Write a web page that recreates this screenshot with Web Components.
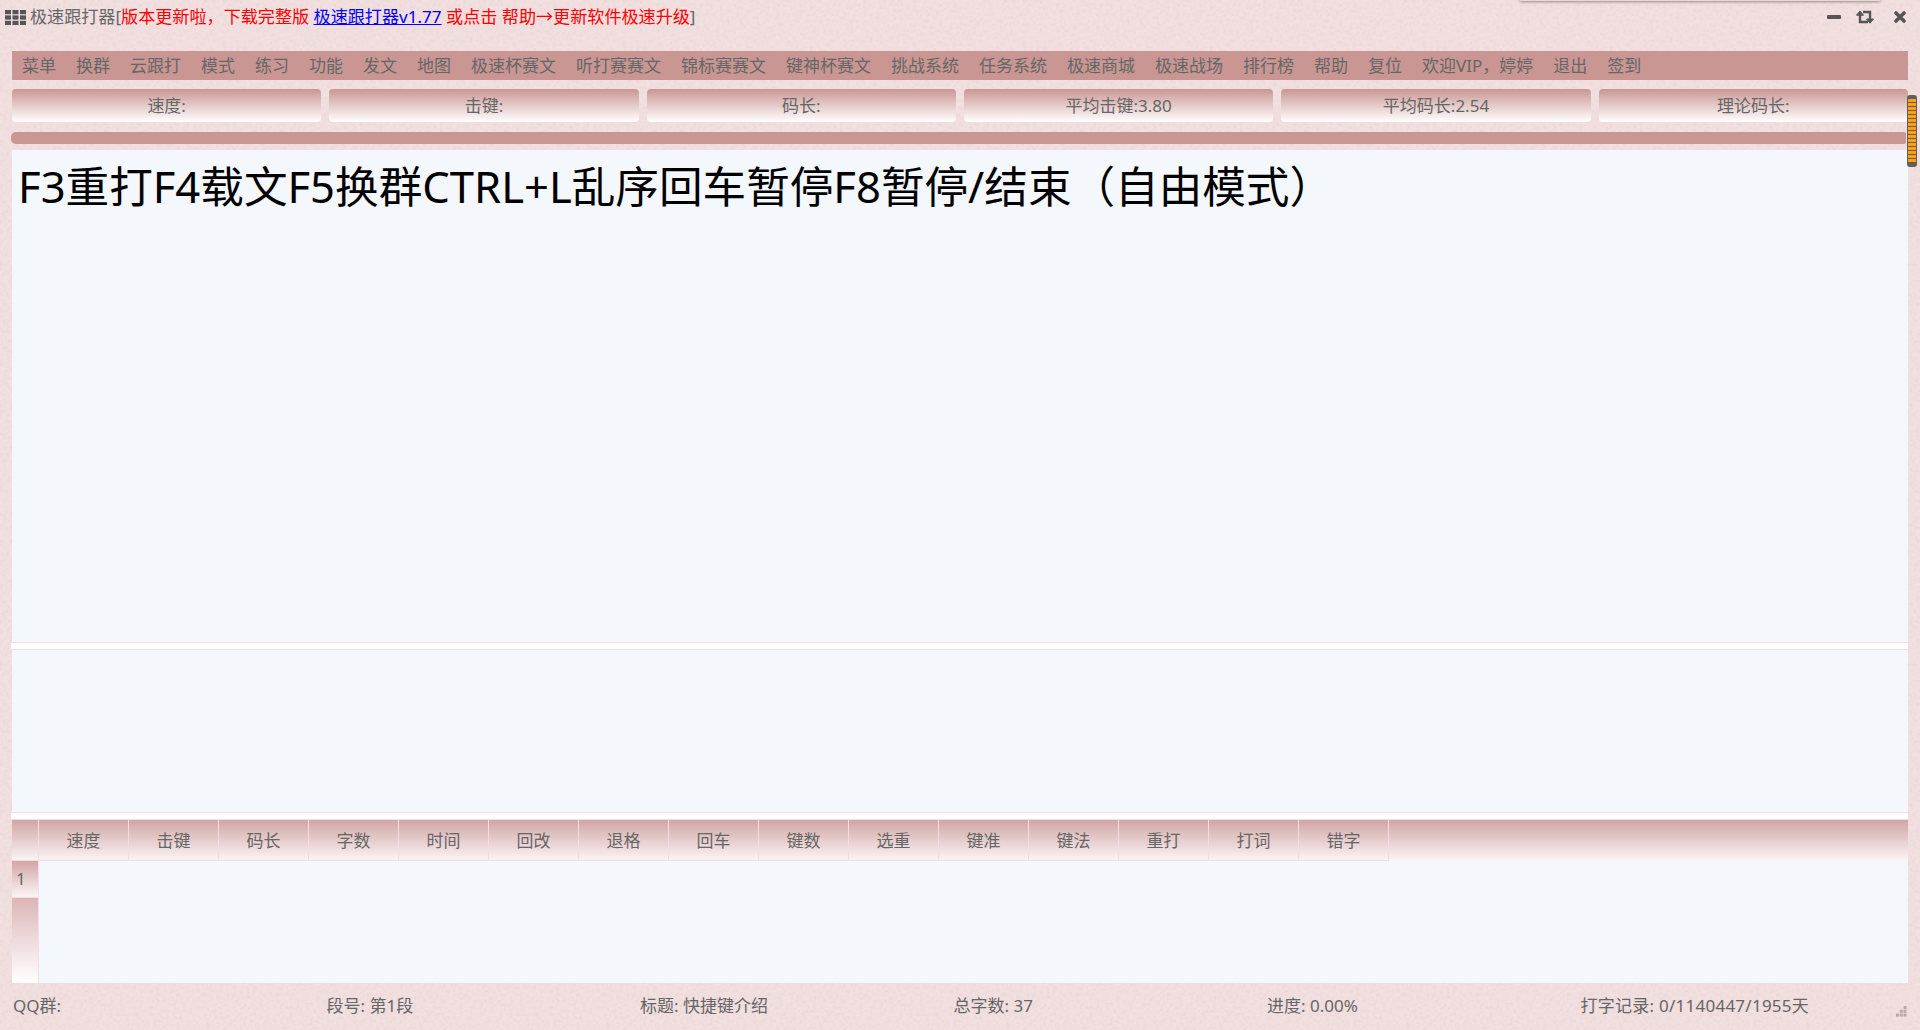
<!DOCTYPE html>
<html lang="zh">
<head>
<meta charset="utf-8">
<title>极速跟打器</title>
<style>
html, body { margin: 0; height: 100%; overflow: hidden; }
body { font-family: "Noto Sans", "Noto Sans CJK SC", sans-serif; color: #666; }
</style>
</head>
<body>
<typer-app>
  <title-bar slot="title"></title-bar>
  <menu-bar slot="menu"></menu-bar>
  <stat-row slot="stats"></stat-row>
  <progress-strip slot="progress"></progress-strip>
  <text-pane slot="target" size="big">F3重打F4载文F5换群CTRL+L乱序回车暂停F8暂停/结束（自由模式）</text-pane>
  <text-pane slot="input"></text-pane>
  <score-table slot="table"></score-table>
  <status-bar slot="status"></status-bar>
</typer-app>

<script>
const noise = "url(\"data:image/svg+xml," + encodeURIComponent(
  '<svg xmlns="http://www.w3.org/2000/svg" width="400" height="400">' +
  '<filter id="n"><feTurbulence type="fractalNoise" baseFrequency="0.3" numOctaves="3" stitchTiles="stitch"/>' +
  '<feColorMatrix values="0 0 0 0 0.6  0 0 0 0 0.38  0 0 0 0 0.38  0.3 0 0 0 -0.11"/></filter>' +
  '<rect width="400" height="400" filter="url(#n)"/></svg>') + "\")";

class TyperApp extends HTMLElement {
  constructor() {
    super();
    this.attachShadow({ mode: "open" });
    this.shadowRoot.innerHTML = `
<style>
:host {
  display: flex;
  flex-direction: column;
  width: 1920px;
  height: 1030px;
  overflow: hidden;
  background: #f2e0e1 ${noise};
  font-size: 17px;
}
.body {
  display: flex;
  flex-direction: column;
  flex: 1;
  padding: 0 12px;
  min-height: 0;
}
.gap-a { height: 9px; }
.gap-b { height: 10px; }
.gap-c { height: 6px; }
.rule {
  height: 6px;
  margin-left: -1px;
  background: #fff;
  border-top: 1px solid #f3dde0;
  border-bottom: 1px solid #f3dde0;
}
.rule.last { border-bottom: 0; }
</style>
<slot name="title"></slot>
<div class="body">
  <slot name="menu"></slot>
  <div class="gap-a"></div>
  <slot name="stats"></slot>
  <div class="gap-b"></div>
  <slot name="progress"></slot>
  <div class="gap-c"></div>
  <slot name="target"></slot>
  <div class="rule"></div>
  <slot name="input"></slot>
  <div class="rule last"></div>
  <slot name="table"></slot>
</div>
<slot name="status"></slot>
`;
  }
}

class TitleBar extends HTMLElement {
  constructor() {
    super();
    this.attachShadow({ mode: "open" });
    this.shadowRoot.innerHTML = `
<style>
:host {
  display: flex;
  align-items: center;
  position: relative;
  height: 34px;
  margin-bottom: 17px;
  padding-left: 5px;
  white-space: nowrap;
  line-height: 32px;
  font-size: 17.1px;
}
.logo { width: 21px; height: 15px; margin-right: 4px; flex: none; }
.red { color: #f00; }
a { color: #00f; text-decoration: underline; }
.win { display: flex; align-items: center; margin-left: auto; padding-right: 14px; }
.win svg { display: block; }
.peek {
  position: absolute;
  left: 1520px;
  top: -4px;
  width: 360px;
  height: 5px;
  background: #e9d6d7;
  box-shadow: 0 1px 3px rgba(90,70,70,.55);
}
</style>
<svg class="logo" viewBox="0 0 21 15" fill="#555">
  <rect x="0" y="0" width="6" height="4.2"/><rect x="7.5" y="0" width="6" height="4.2"/><rect x="15" y="0" width="6" height="4.2"/>
  <rect x="0" y="5.4" width="6" height="4.2"/><rect x="7.5" y="5.4" width="6" height="4.2"/><rect x="15" y="5.4" width="6" height="4.2"/>
  <rect x="0" y="10.8" width="6" height="4.2"/><rect x="7.5" y="10.8" width="6" height="4.2"/><rect x="15" y="10.8" width="6" height="4.2"/>
</svg>
<span>极速跟打器[<span class="red">版本更新啦，下载完整版 </span><a href="#">极速跟打器v1.77</a><span class="red"> 或点击 帮助→更新软件极速升级</span>]</span>
<div class="win">
  <svg width="14" height="14" viewBox="0 0 14 14" style="margin-right:15px"><rect x="0" y="5" width="14" height="4" rx="1" fill="#555"/></svg>
  <svg width="18" height="14" viewBox="0 0 18 14" style="margin-right:20px" fill="none" stroke="#555" stroke-width="2.4">
    <path d="M4 3v9h8"/><path d="M7 2h7v9"/>
    <path d="M0.5 5.2L4 1L7.5 5.2z" fill="#555" stroke-width="1"/><path d="M10.5 9L14 13.2L17.5 9z" fill="#555" stroke-width="1"/>
  </svg>
  <svg width="12" height="12" viewBox="0 0 12 12" stroke="#555" stroke-width="3.6" stroke-linecap="round"><path d="M2 2l8 8M10 2l-8 8"/></svg>
</div>
<div class="peek"></div>
`;
  }
}

class MenuBar extends HTMLElement {
  constructor() {
    super();
    this.attachShadow({ mode: "open" });
    const items = ["菜单","换群","云跟打","模式","练习","功能","发文","地图","极速杯赛文","听打赛赛文","锦标赛赛文","键神杯赛文","挑战系统","任务系统","极速商城","极速战场","排行榜","帮助","复位","欢迎VIP，婷婷","退出","签到"];
    this.shadowRoot.innerHTML = `
<style>
:host {
  display: flex;
  height: 29px;
  line-height: 29px;
  background: #c99693;
  white-space: nowrap;
}
span { padding: 0 10px; }
</style>
` + items.map(t => `<span>${t}</span>`).join("");
  }
}

class StatRow extends HTMLElement {
  constructor() {
    super();
    this.attachShadow({ mode: "open" });
    const items = ["速度:","击键:","码长:","平均击键:3.80","平均码长:2.54","理论码长:"];
    this.shadowRoot.innerHTML = `
<style>
:host {
  display: grid;
  grid-template-columns: repeat(6, 1fr);
  gap: 8px;
  height: 33px;
}
div {
  line-height: 33px;
  text-align: center;
  border-radius: 4px;
  background: linear-gradient(#c99693, #fff);
}
</style>
` + items.map(t => `<div>${t}</div>`).join("");
  }
}

class ProgressStrip extends HTMLElement {
  constructor() {
    super();
    this.attachShadow({ mode: "open" });
    this.shadowRoot.innerHTML = `
<style>
:host {
  display: block;
  position: relative;
  height: 12px;
  margin-right: 2px;
  margin-left: -1px;
  background: #c99693;
  border-radius: 5px 2px 2px 5px;
}
.thumb {
  position: absolute;
  left: 1896px;
  top: -37px;
  width: 10px;
  height: 72px;
  box-sizing: border-box;
  border: 1px solid #5f5f5f;
  border-width: 4px 1px;
  border-radius: 3px;
  background: repeating-linear-gradient(#f7a11a 0 3px, #7a5a2a 3px 4px);
}
</style>
<div class="thumb"></div>
`;
  }
}

class TextPane extends HTMLElement {
  constructor() {
    super();
    this.attachShadow({ mode: "open" });
    this.shadowRoot.innerHTML = `
<style>
:host {
  display: block;
  background: #f4f7fc;
  height: 162px;
  color: #000;
  overflow: hidden;
}
:host([size="big"]) {
  height: 492px;
  padding: 3px 6px 0;
  box-sizing: border-box;
  font-size: 43.6px;
  line-height: 66px;
  white-space: nowrap;
}
</style>
<slot></slot>
`;
  }
}

class ScoreTable extends HTMLElement {
  constructor() {
    super();
    this.attachShadow({ mode: "open" });
    const cols = ["速度","击键","码长","字数","时间","回改","退格","回车","键数","选重","键准","键法","重打","打词","错字"];
    this.shadowRoot.innerHTML = `
<style>
:host {
  display: grid;
  grid-template-columns: 27px 1fr;
  grid-template-rows: 42px 37px 85px;
  background: #f4f7fc;
}
.head {
  grid-column: 1 / 3;
  display: flex;
  background: linear-gradient(#d2a5a6, #fbf5f5);
  border-top: 1px solid #f3dde0;
  box-sizing: border-box;
}
.head div {
  box-sizing: border-box;
  width: 90px;
  line-height: 41px;
  text-align: center;
  border-right: 1px solid #f3dde0;
  border-bottom: 1px solid #f3dde0;
}
.head .corner { width: 27px; }
.side {
  grid-column: 1;
  border-right: 1px solid #f3dde0;
  box-sizing: border-box;
}
.num {
  background: linear-gradient(#d2a5a6, #fbf5f5);
  border-bottom: 1px solid #f3dde0;
  padding-left: 4px;
  line-height: 36px;
}
.rest { background: linear-gradient(#dcb6b7, #fff); }
</style>
<div class="head"><div class="corner"></div>${cols.map(c => `<div>${c}</div>`).join("")}</div>
<div class="side num">1</div>
<div class="side rest"></div>
`;
  }
}

class StatusBar extends HTMLElement {
  constructor() {
    super();
    this.attachShadow({ mode: "open" });
    const items = ["QQ群:","段号: 第1段","标题: 快捷键介绍","总字数: 37","进度: 0.00%","打字记录: 0/1140447/1955天"];
    this.shadowRoot.innerHTML = `
<style>
:host {
  display: grid;
  grid-template-columns: repeat(6, 313.5px);
  position: relative;
  height: 47px;
  line-height: 46px;
  padding-left: 13px;
  white-space: nowrap;
}
div:last-of-type { letter-spacing: .25px; }
svg { position: absolute; left: 1896px; top: 23px; }
</style>
${items.map(t => `<div>${t}</div>`).join("")}
<svg width="11" height="11" viewBox="0 0 11 11" fill="#b5a8a8">
  <rect x="7.5" y="0" width="3" height="3"/>
  <rect x="3.8" y="3.8" width="3" height="3"/><rect x="7.5" y="3.8" width="3" height="3"/>
  <rect x="0" y="7.6" width="3" height="3"/><rect x="3.8" y="7.6" width="3" height="3"/><rect x="7.5" y="7.6" width="3" height="3"/>
</svg>
`;
  }
}

customElements.define("typer-app", TyperApp);
customElements.define("title-bar", TitleBar);
customElements.define("menu-bar", MenuBar);
customElements.define("stat-row", StatRow);
customElements.define("progress-strip", ProgressStrip);
customElements.define("text-pane", TextPane);
customElements.define("score-table", ScoreTable);
customElements.define("status-bar", StatusBar);
</script>
</body>
</html>
